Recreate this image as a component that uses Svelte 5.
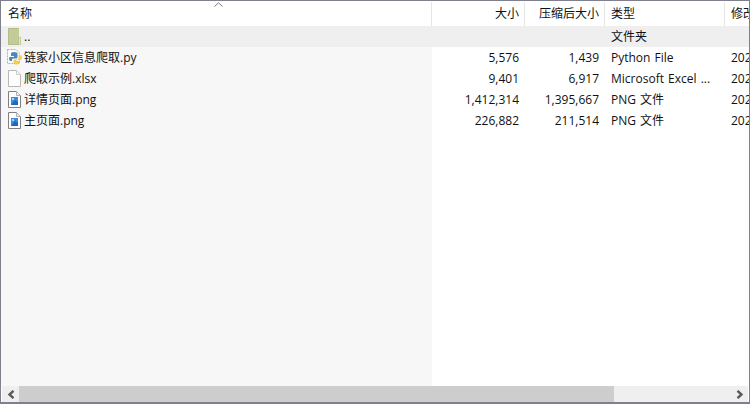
<script>
const cols = [
	{ label: '名称', w: 431, cls: 'name' },
	{ label: '大小', w: 93, cls: 'num' },
	{ label: '压缩后大小', w: 80, cls: 'num' },
	{ label: '类型', w: 120, cls: 'type' },
	{ label: '修改', w: 40, cls: 'type' }
];

const files = [
	{ name: '..', icon: 'folder', size: '', packed: '', type: '文件夹', date: '' },
	{ name: '链家小区信息爬取.py', icon: 'py', size: '5,576', packed: '1,439', type: 'Python File', date: '202' },
	{ name: '爬取示例.xlsx', icon: 'blank', size: '9,401', packed: '6,917', type: 'Microsoft Excel ...', date: '202' },
	{ name: '详情页面.png', icon: 'png', size: '1,412,314', packed: '1,395,667', type: 'PNG 文件', date: '202' },
	{ name: '主页面.png', icon: 'png', size: '226,882', packed: '211,514', type: 'PNG 文件', date: '202' }
];
</script>

<div class="window">
	<div class="header">
		{#each cols as col}
			<div class="head {col.cls}" style="width: {col.w}px">{col.label}</div>
		{/each}
		<svg class="sort" width="9" height="5" viewBox="0 0 9 5"><path d="M0.5 4.5 L4.5 0.8 L8.5 4.5" fill="none" stroke="#777" /></svg>
	</div>
	<div class="list">
		<div class="rows">
			{#each files as f, i}
				<div class="row" class:up={i === 0}>
					<div class="cell name">
						<span class="icon">
							{#if f.icon === 'folder'}
								<svg width="13" height="17" viewBox="0 0 13 17">
									<path d="M0 0 H11 V9 H13 V17 H0 Z" fill="#c3cc99" />
									<path d="M11 9.5 V16.5 H0.5 V0.5 H10.5" fill="none" stroke="#b4bd8a" />
									<path d="M11.5 10 V16.5" stroke="#e2e6c8" />
								</svg>
							{:else if f.icon === 'py'}
								<svg class="py" width="17" height="17" viewBox="0 0 17 17">
									<path d="M1.5 0.5 H10 L13.5 4 V14.5 H1.5 Z" fill="#fbfbfb" stroke="#b0b0b0" stroke-dasharray="2 1" />
									<path d="M4 8 H8 V7 H5 V4.5 Q5 3 8 3 Q11.5 3 11.5 4.5 V8 Q11.5 9.5 10 9.5 H7 Q6 9.5 6 11 V12 H4.5 Q3 11.5 3 9.5 Q3 8 4 8 Z" fill="#4d86b8" />
									<path d="M12.5 6 H14 Q16 6.5 16 9 Q16 11 14 11 H10.5 V12 H13 V14 Q13 15.5 10.5 15.5 Q7.5 15.5 7.5 14 V11.5 Q7.5 10.5 9 10.5 H11 Q12.5 10.5 12.5 9 Z" fill="#f3cc4e" />
								</svg>
							{:else if f.icon === 'blank'}
								<svg width="13" height="17" viewBox="0 0 13 17">
									<path d="M0.5 0.5 H8.5 L12.5 4.5 V16.5 H0.5 Z" fill="#fdfdfd" stroke="#b8b8b8" />
									<path d="M8.5 0.5 V4.5 H12.5" fill="#f0f0f0" stroke="#cfcfcf" />
								</svg>
							{:else}
								<svg width="13" height="17" viewBox="0 0 13 17">
									<path d="M0.5 0.5 H8.5 L12.5 4.5 V16.5 H0.5 Z" fill="#fdfdfd" stroke="#808080" />
									<path d="M8.5 0.5 V4.5 H12.5" fill="#f0f0f0" stroke="#b0b0b0" />
									<rect x="3" y="6" width="7" height="8" fill="#3a8ce0" />
									<path d="M3 14 L7 9 L10 11 V14 Z" fill="#2366bd" />
									<rect x="4" y="7" width="2" height="2" fill="#a8d4f5" />
								</svg>
							{/if}
						</span>
						<span class="fname">{f.name}</span>
					</div>
					<div class="cell num size">{f.size}</div>
					<div class="cell num packed">{f.packed}</div>
					<div class="cell type kind">{f.type}</div>
					<div class="cell type date">{f.date}</div>
				</div>
			{/each}
		</div>
	</div>
	<div class="scrollbar">
		<span class="arrow">
			<svg width="8" height="9" viewBox="0 0 8 9"><path d="M6.5 0.8 L2.5 4.5 L6.5 8.2" fill="none" stroke="#5a5a5a" stroke-width="2.4" /></svg>
		</span>
		<div class="thumb"></div>
		<div class="track"></div>
		<span class="arrow end">
			<svg width="8" height="9" viewBox="0 0 8 9"><path d="M1.5 0.8 L5.5 4.5 L1.5 8.2" fill="none" stroke="#5a5a5a" stroke-width="2.4" /></svg>
		</span>
	</div>
</div>

<style>
:global(body) {
	margin: 0;
	background: #fff;
}

.window {
	width: 750px;
	height: 404px;
	box-sizing: border-box;
	border: 1px solid #7f7f8f;
	border-bottom-width: 2px;
	display: flex;
	flex-direction: column;
	font-family: "Noto Sans CJK SC", "Open Sans", sans-serif;
	font-size: 12px;
	color: #111;
	overflow: hidden;
	background: #fff;
}

.header {
	height: 25px;
	flex: none;
	display: flex;
	position: relative;
	background: #fff;
}

.head {
	flex: none;
	box-sizing: border-box;
	height: 24px;
	margin-top: 1px;
	border-right: 1px solid #e5e5e5;
	line-height: 22px;
	padding: 0 6px;
}

.head.name {
	padding-left: 7px;
}

.head.num {
	text-align: right;
	padding-right: 5px;
}

.sort {
	position: absolute;
	left: 213px;
	top: 1px;
}

.list {
	flex: 1;
	min-height: 0;
	background: linear-gradient(to right, #f7f7f7 431px, #fff 431px);
}

.row {
	height: 21px;
	display: flex;
	white-space: nowrap;
	line-height: 21px;
}

.row.up {
	background: #efefef;
}

.cell {
	flex: none;
	box-sizing: border-box;
	overflow: hidden;
}

.cell.name {
	width: 431px;
	display: flex;
	align-items: center;
}

.icon {
	width: 23px;
	flex: none;
	display: flex;
	box-sizing: border-box;
	padding-left: 7px;
}

.py {
	margin-left: -2px;
	overflow: visible;
}

.fname {
	font-family: "Open Sans", "Noto Sans CJK SC", sans-serif;
}

.cell.num {
	text-align: right;
	padding-right: 6px;
	font-family: "Open Sans", sans-serif;
}

.size {
	width: 93px;
}

.packed {
	width: 80px;
}

.kind {
	width: 120px;
	padding-left: 6px;
	word-spacing: 1px;
	font-family: "Open Sans", "Noto Sans CJK SC", sans-serif;
}

.date {
	width: 40px;
	padding-left: 6px;
	font-family: "Open Sans", sans-serif;
}

.scrollbar {
	height: 16px;
	flex: none;
	display: flex;
	margin: 0 1px;
	background: #efefef;
}

.arrow {
	width: 17px;
	flex: none;
	display: flex;
	align-items: center;
	justify-content: center;
}

.thumb {
	width: 595px;
	background: #cdcdcd;
}

.track {
	flex: 1;
}
</style>
